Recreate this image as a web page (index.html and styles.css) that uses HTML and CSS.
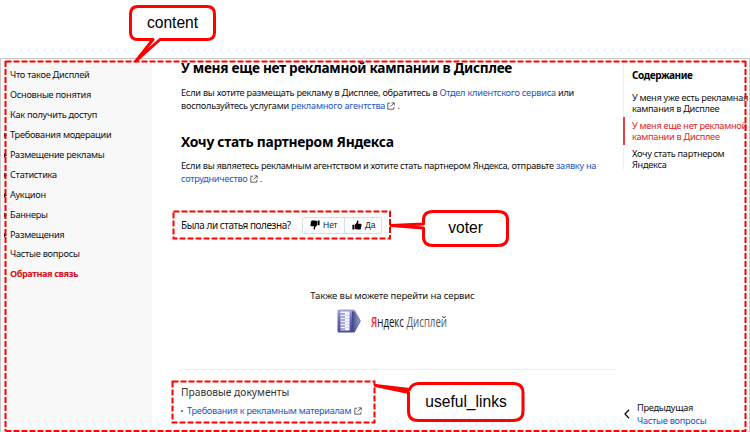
FILE: index.html
```
<!DOCTYPE html>
<html lang="ru">
<head>
<meta charset="utf-8">
<title>Обратная связь</title>
<link rel="stylesheet" href="styles.css">
</head>
<body>
<svg class="sprites" aria-hidden="true">
  <symbol id="ext" viewBox="0 0 8 8"><path d="M3 1.2H.8v6h6V5M4.5.8h2.8v2.7M7.1 1 3.6 4.5" fill="none" stroke="#333" stroke-width=".75"/></symbol>
  <symbol id="thumb" viewBox="0 0 10 10"><path d="M.4 4.8h2v4.6h-2zM2.9 4.8 4.9 2.6V.9c0-.9 1.6-.6 1.6.6 0 .9-.5 1.5-.6 2.2h2.7c1 0 1.2 1.1.6 1.5.6.4.4 1.2-.1 1.4.4.5.2 1.1-.3 1.3.3.8-.2 1.5-1 1.5H5.2c-.8 0-1.3-.4-2.3-.5z"/></symbol>
</svg>
<div class="page">
  <nav class="sidebar">
    <a>Что такое Дисплей</a>
    <a>Основные понятия</a>
    <a>Как получить доступ</a>
    <a class="group">Требования модерации</a>
    <a class="group">Размещение рекламы</a>
    <a class="group">Статистика</a>
    <a class="group">Аукцион</a>
    <a class="group">Баннеры</a>
    <a class="group">Размещения</a>
    <a>Частые вопросы</a>
    <a class="current">Обратная связь</a>
  </nav>
  <main class="article">
    <h2>У меня еще нет рекламной кампании в Дисплее</h2>
    <p>Если вы хотите размещать рекламу в Дисплее, обратитесь в <a>Отдел клиентского сервиса</a> или<br>воспользуйтесь услугами <a>рекламного агентства</a> <svg class="ext"><use href="#ext"/></svg> .</p>
    <h2 class="second">Хочу стать партнером Яндекса</h2>
    <p class="second-text">Если вы являетесь рекламным агентством и хотите стать партнером Яндекса, отправьте <a>заявку на</a><br><a>сотрудничество</a> <svg class="ext"><use href="#ext"/></svg> .</p>
    <div class="voter">
      <span class="question">Была ли статья полезна?</span>
      <div class="buttons">
        <button><svg class="thumb down"><use href="#thumb"/></svg>Нет</button>
        <button><svg class="thumb"><use href="#thumb"/></svg>Да</button>
      </div>
    </div>
    <div class="service">
      <div class="service-title">Также вы можете перейти на сервис</div>
      <div class="logo">
        <svg class="logo-mark" viewBox="0 0 24 24">
          <defs>
            <linearGradient id="body" x2="0" y2="1"><stop stop-color="#a2a5dc"/><stop offset=".5" stop-color="#6266b3"/><stop offset="1" stop-color="#454b91"/></linearGradient>
            <linearGradient id="side" x2="1" y2="0"><stop stop-color="#3e447f"/><stop offset="1" stop-color="#9da1d6"/></linearGradient>
          </defs>
          <path d="M2 .5h15.5L23.8 12l-6.3 11.5H2Q.5 23.5.5 22V2Q.5.5 2 .5z" fill="url(#body)"/>
          <path d="M15 2.5h2.5L22.8 12l-5.3 9.5H15z" fill="url(#side)"/>
          <path d="M3.5 2.5h9v19h-9z" fill="#f4f4ff"/>
          <path d="M3.5 5H8M3.5 8H8M3.5 11H8M3.5 14H8M3.5 17H8M3.5 20H8" stroke="#5558a5" stroke-width="1.1"/>
          <path d="M8 6.5h4.5M8 9.5h4.5M8 12.5h4.5M8 15.5h4.5M8 18.5h4.5" stroke="#b9bbdf" stroke-width=".6"/>
        </svg>
        <span class="logo-name"><b>Я</b><i>ндекс</i> Дисплей</span>
      </div>
    </div>
    <section class="legal">
      <h3>Правовые документы</h3>
      <div class="legal-link"><span class="bullet"></span><a>Требования к рекламным материалам</a> <svg class="ext"><use href="#ext"/></svg></div>
    </section>
  </main>
  <aside class="toc">
    <div class="toc-list">
      <h4>Содержание</h4>
      <a>У меня уже есть рекламная<br>кампания в Дисплее</a>
      <a class="active">У меня еще нет рекламной<br>кампании в Дисплее</a>
      <a>Хочу стать партнером<br>Яндекса</a>
    </div>
    <div class="prev">
      <svg class="chevron" viewBox="0 0 6 10"><path d="M5 .8 1 5l4 4.2" fill="none" stroke="#111" stroke-width="1.3"/></svg>
      <div><div>Предыдущая</div><a>Частые вопросы</a></div>
    </div>
  </aside>
</div>
<svg class="marks" viewBox="0 0 750 432">
  <g class="dashes">
    <path d="M5.5 61.5H746"/><path d="M5.5 61V431"/><path d="M745.5 61V431"/><path d="M5.5 431H746"/>
    <path d="M173.5 211.5H390V238.5H173.5z"/>
    <path d="M172.5 381.5H374.5V422.5H172.5z"/>
  </g>
  <g class="bubbles">
    <path d="M138 6.5h69q7.5 0 7.5 7.5v18.5q0 7-7.5 7h-47L136 61l17-21.5h-15q-7.5 0-7.5-7V14q0-7.5 7.5-7.5z"/>
    <path d="M433 211.5h65q9.5 0 9.5 8.5v17q0 8.5-9.5 8.500h-65q-9.500 0-9.500-8.500v-9L391 225.500l32.500-1.500v-4q0-8.500 9.500-8.500z"/>
    <path d="M419 383.500h94q10 0 10 9.500v18q0 9.500-10 9.500H418q-9.500 0-9.500-9.500v-18.500L375.500 385.500l34 4q2.500-6 9.500-6z"/>
  </g>
</svg>
<div class="label label-content">content</div>
<div class="label label-voter">voter</div>
<div class="label label-links">useful_links</div>
</body>
</html>
```
FILE: styles.css
```
* { box-sizing: border-box; }
body {
  margin: 0;
  width: 750px;
  height: 432px;
  overflow: hidden;
  position: relative;
  padding-top: 58px;
  background: #fff;
  color: #111;
  font: 9.2px/13px "Noto Sans", "Open Sans", sans-serif;
  white-space: nowrap;
}
h2, h3, h4, p { margin: 0; }
a { color: #1a56c4; }
.sprites { display: none; }
.page {
  display: grid;
  grid-template-columns: 151px 471px 126px;
  height: 374px;
  border: 1px solid #c9c9c9;
  border-bottom: 0;
}
.sidebar {
  display: flex;
  flex-direction: column;
  height: 365px;
  padding: 6px 0 0 9px;
  background: #f8f8f8;
  letter-spacing: -0.26px;
}
.sidebar a { color: #111; line-height: 20px; height: 19.95px; }
.sidebar .group::before {
  content: "";
  float: left;
  width: 3px;
  height: 5px;
  margin: 8px 0 0 -6px;
  background: #222;
  clip-path: polygon(0 0, 100% 50%, 0 100%);
}
.sidebar .current { color: #d9101c; font-weight: 700; letter-spacing: -0.45px; }
.article { padding-left: 29px; }
h2 {
  margin-top: -2px;
  color: #000;
  font-size: 15px;
  line-height: 20px;
  font-weight: 700;
  letter-spacing: -0.3px;
  transform: scaleX(.909);
  transform-origin: 0 50%;
}
.article p { margin-top: 9px; height: 27px; line-height: 13.3px; letter-spacing: -0.24px; }
h2.second { margin-top: 18px; transform: scaleX(.922); }
.article p.second-text { margin-top: 8px; letter-spacing: -0.28px; }
.ext { width: 8px; height: 8px; vertical-align: -1px; }
.voter { display: flex; align-items: center; height: 16px; margin-top: 31px; }
.question { width: 121px; font-size: 10px; letter-spacing: -0.45px; }
.buttons { display: flex; }
button {
  display: flex;
  align-items: center;
  gap: 3px;
  width: 43px;
  height: 17px;
  padding: 0 0 0 7px;
  border: 1px solid #ddd;
  border-radius: 2px 0 0 2px;
  background: #fff;
  color: #222;
  font: 8.5px "Liberation Sans", sans-serif;
}
button + button { width: 38px; margin-left: -1px; border-radius: 0 2px 2px 0; }
.thumb { width: 10px; height: 10px; }
.down { transform: rotate(180deg); }
.service { width: 423px; margin-top: 56px; text-align: center; }
.service-title { font-size: 9.5px; letter-spacing: -0.1px; }
.logo { display: flex; align-items: center; height: 24px; margin: 7px 0 0 156px; }
.logo-mark { width: 24px; height: 24px; }
.logo-name { margin-left: 10px; font: 14px "Open Sans", sans-serif; color: #555; transform: scaleX(.69); transform-origin: 0 50%; }
.logo-name b { color: #f22; font-weight: 600; }
.logo-name i { color: #111; font-style: normal; font-weight: 500; }
.legal { width: 434px; margin-top: 36px; padding-top: 14px; border-top: 1px solid #eee; }
h3 { font-size: 11.5px; line-height: 16px; font-weight: 400; color: #333; transform: scaleX(.89); transform-origin: 0 50%; }
.legal-link { display: flex; align-items: center; gap: 3px; margin-top: 4px; letter-spacing: -0.28px; }
.bullet { width: 2px; height: 2px; margin: 1px 1px 0 0; border-radius: 1px; background: #1a56c4; }
.toc { display: flex; flex-direction: column; justify-content: space-between; letter-spacing: -0.27px; }
.toc-list { border-left: 1px solid #f1f1f1; padding: 10px 0 0; }
h4 { margin-left: 8px; font-size: 10px; line-height: 13px; color: #000; letter-spacing: -0.4px; }
.toc-list a { display: block; margin-top: 6px; padding-left: 8px; color: #111; line-height: 11px; }
.toc-list h4 + a { margin-top: 10px; }
.toc-list .active { margin: 3px 0 -3px -1px; padding: 3px 0 3px 7px; border-left: 2px solid #e34046; color: #df1c24; }
.prev { display: flex; align-items: center; gap: 7px; margin-bottom: 5px; padding-left: 1px; }
.chevron { width: 6px; height: 10px; }
.marks { position: absolute; left: 0; top: 0; width: 750px; height: 432px; }
.dashes path { fill: none; stroke: #f00; stroke-width: 2; stroke-dasharray: 6 2; }
.bubbles path { fill: #fff; stroke: #f00; stroke-width: 3; stroke-linejoin: round; }
.label { position: absolute; text-align: center; color: #000; font: 15.6px/18px "Liberation Sans", sans-serif; }
.label-content { left: 130px; top: 14px; width: 85px; }
.label-voter { left: 423px; top: 219px; width: 85px; }
.label-links { left: 408px; top: 393px; width: 116px; }
```
